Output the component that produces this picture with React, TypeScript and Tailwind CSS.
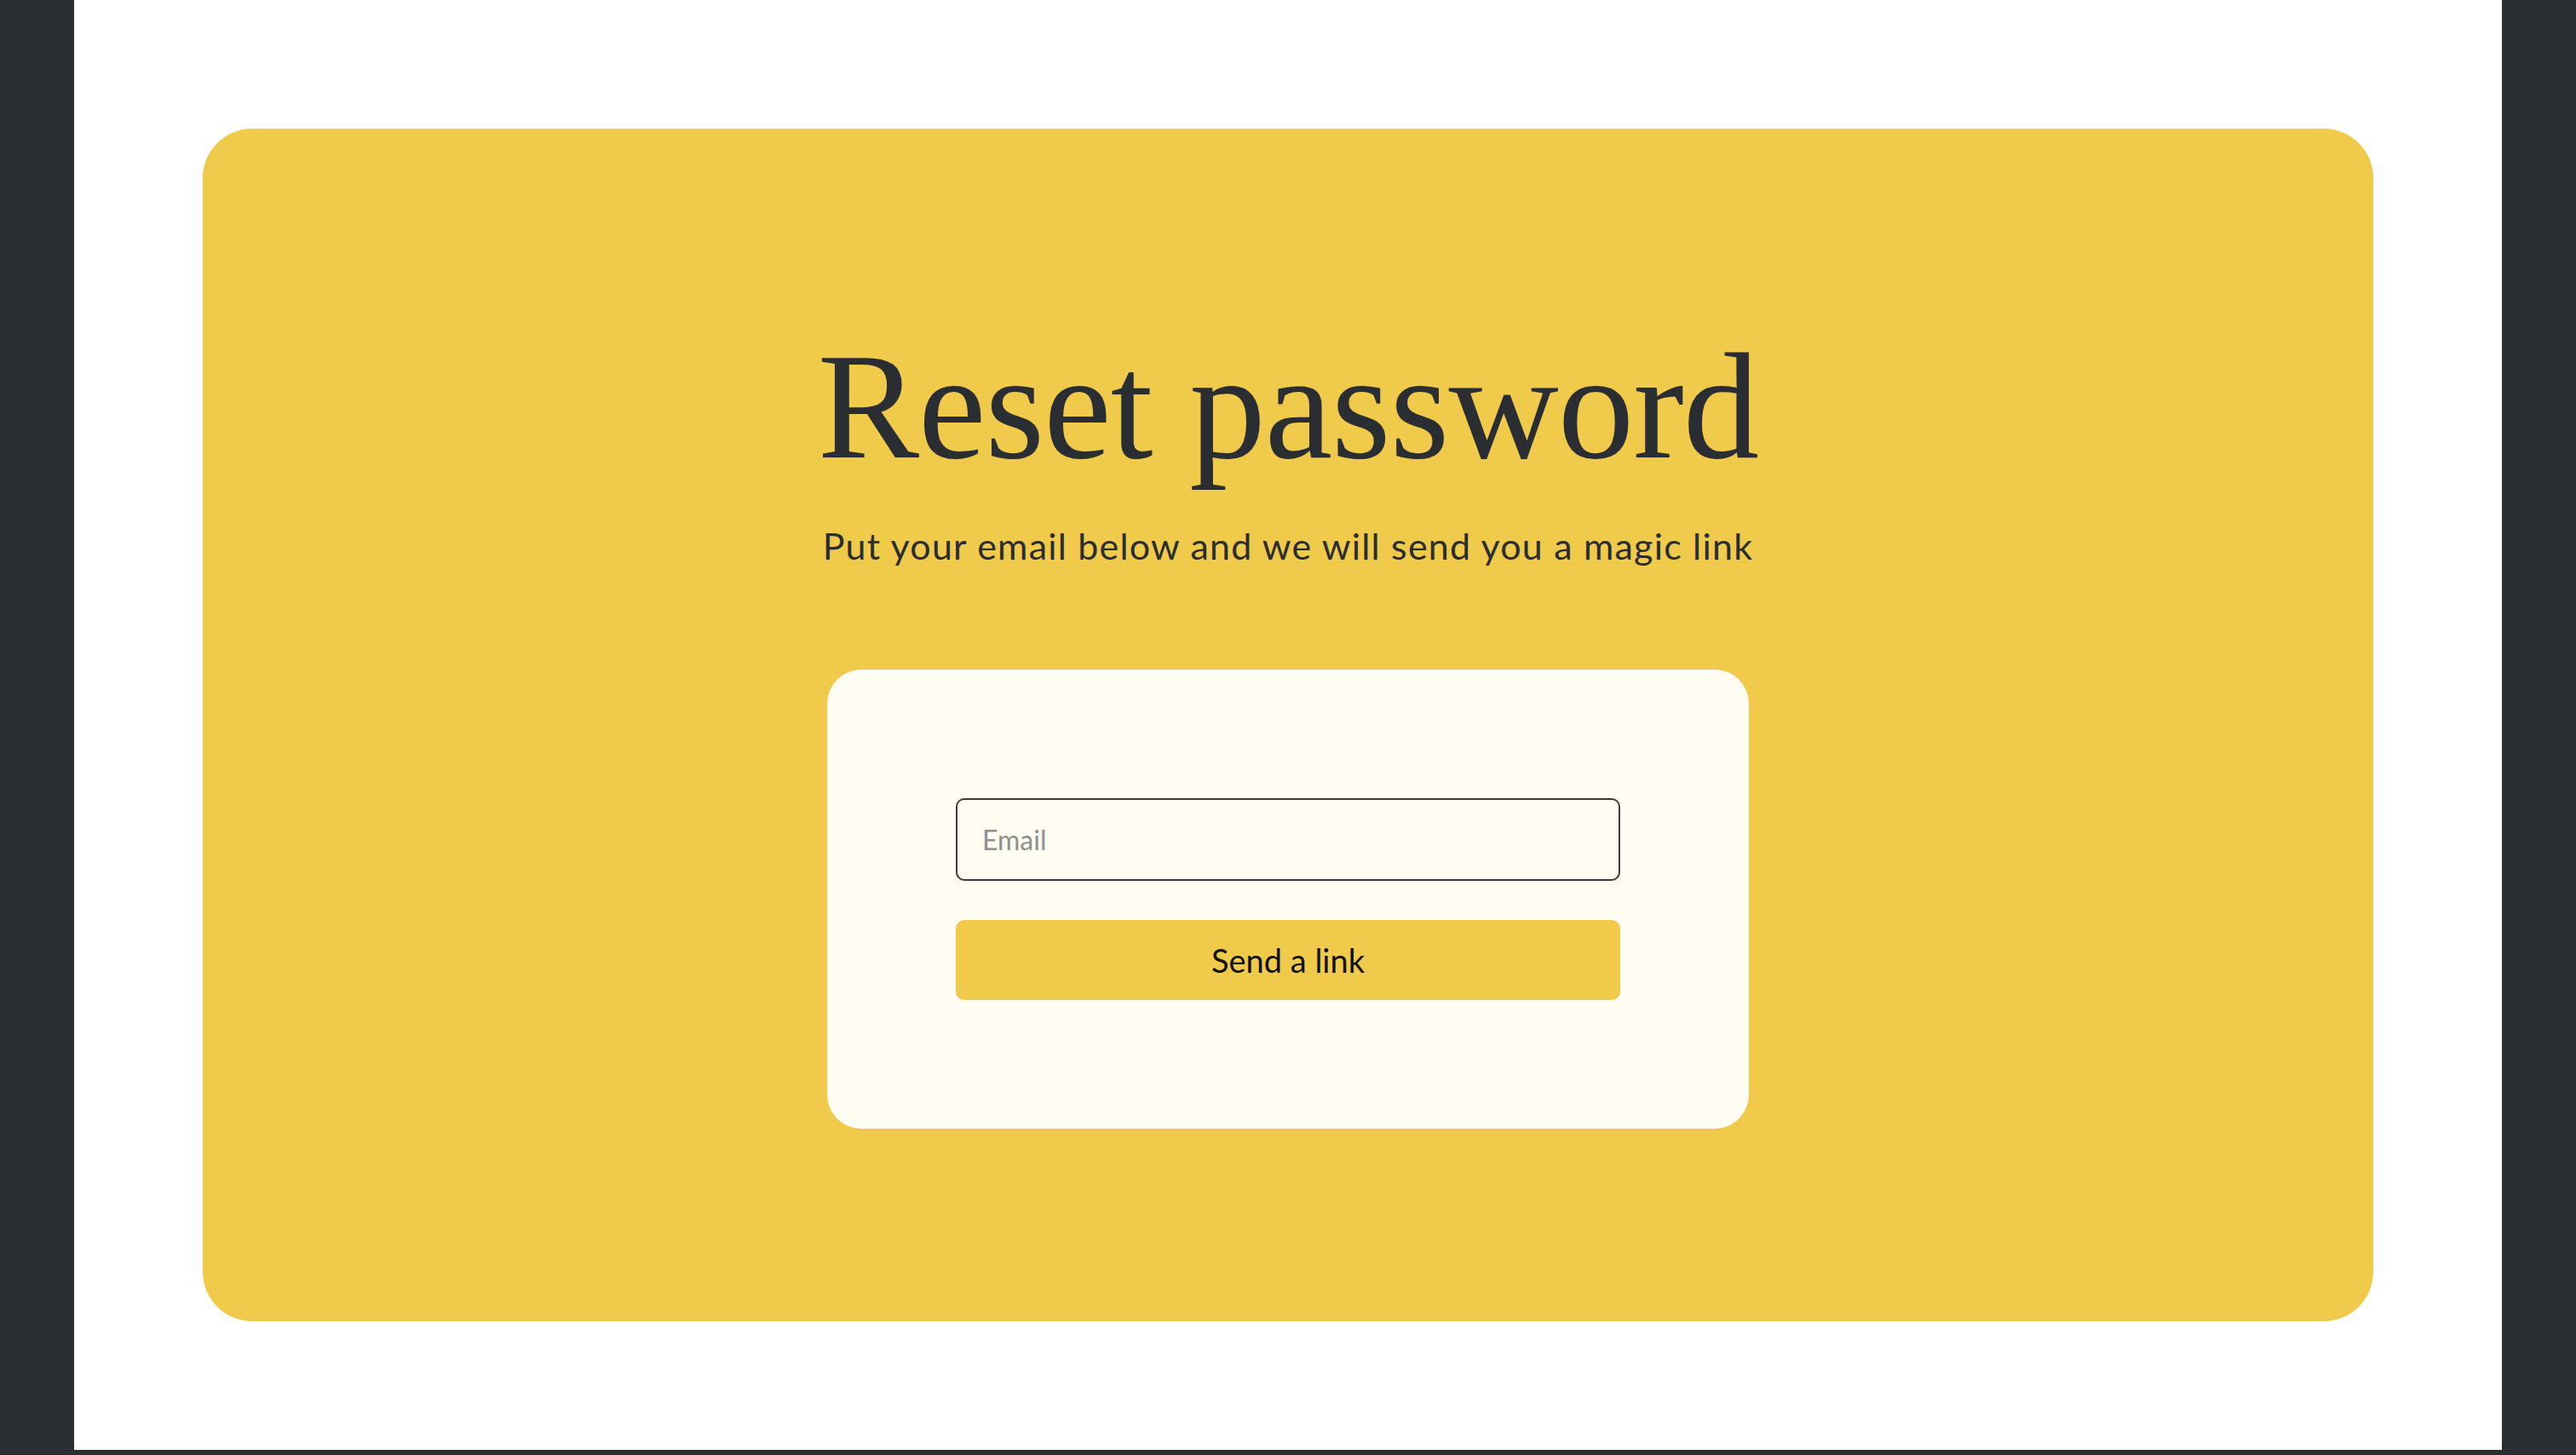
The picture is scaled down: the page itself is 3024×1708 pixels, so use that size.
import React from "react";

export default function App() {
  return (
    <div className="w-[3024px] h-[1708px] bg-[#2a2d32] overflow-hidden">
      <div className="ml-[87px] w-[2850px] h-[1702px] bg-white p-[151px]">
        <div className="h-[1400px] w-full rounded-[58px] bg-[#f0ca4b] flex flex-col items-center pt-[236px]">
          <h1
            className="text-[179px] leading-none text-[#2a2d32] tracking-[-1px]"
            style={{ fontFamily: '"Liberation Serif", "DejaVu Serif", serif' }}
          >
            Reset password
          </h1>
          <p
            className="mt-[53px] text-[43px] leading-none text-[#2a2d32] tracking-[1.2px]"
            style={{ fontFamily: 'Lato, "Noto Sans", sans-serif' }}
          >
            Put your email below and we will send you a magic link
          </p>
          <div className="mt-[124px] w-[1082px] rounded-[40px] bg-[#fffcf2] p-[151px] flex flex-col gap-[46px]">
            <input
              type="email"
              placeholder="Email"
              className="h-[97px] w-full rounded-[10px] border-2 border-[#3a3a3a] bg-[#fffcf2] px-[29px] text-[32px] text-[#222] placeholder:text-[#8f8f8f] outline-none"
              style={{ fontFamily: 'Lato, "Noto Sans", sans-serif' }}
            />
            <button
              className="h-[94px] w-full rounded-[10px] bg-[#f0ca4b] text-[38px] text-[#111]"
              style={{ fontFamily: 'Lato, "Noto Sans", sans-serif' }}
            >
              Send a link
            </button>
          </div>
        </div>
      </div>
    </div>
  );
}
